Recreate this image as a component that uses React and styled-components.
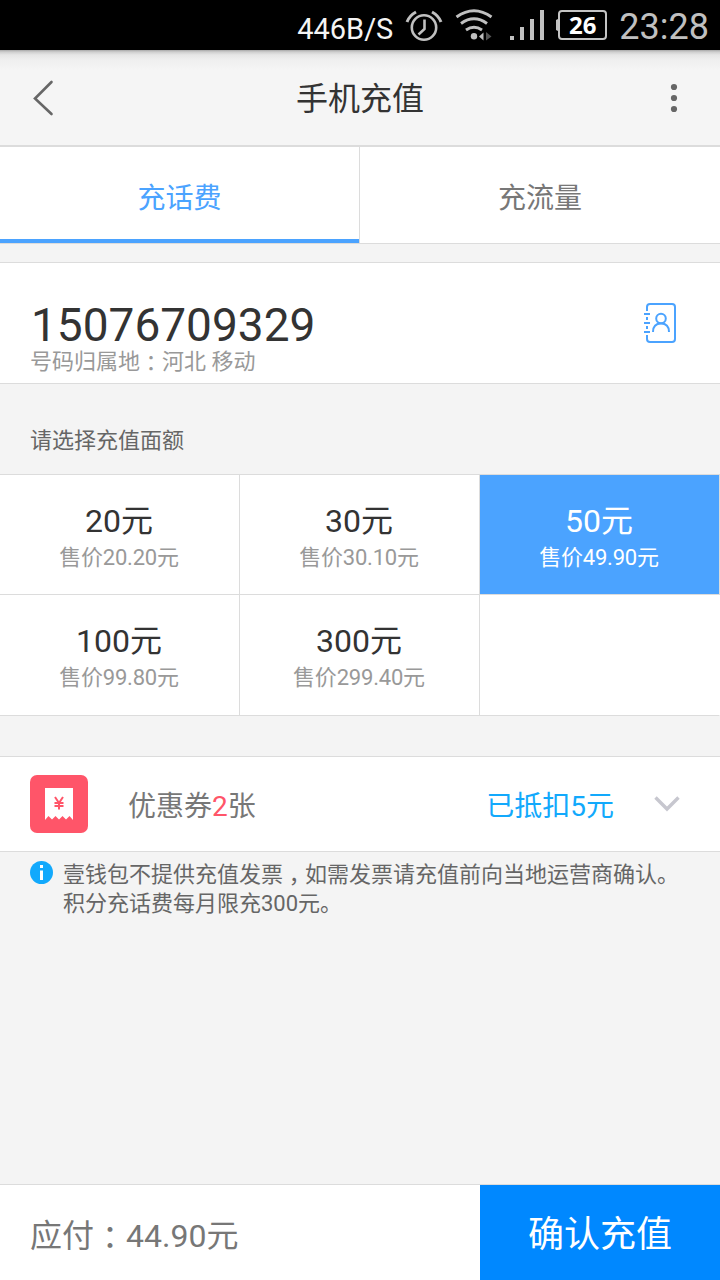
import React from 'react'
import styled, { createGlobalStyle } from 'styled-components'
import { useState } from 'react';

const GlobalStyle=createGlobalStyle`
  *{
    box-sizing:border-box;
  }
  body{
    margin:0;
    background-color:#f4f4f4;
    font-family: Roboto, "Noto Sans CJK SC", sans-serif;
  }
`;
const Page=styled.div`
  width:720px;
  height:1280px;
  display:flex;
  flex-direction:column;
  overflow:hidden;
  background-color:#f4f4f4;
`;
// ///////////// status bar /////////////
const StatusBar=styled.div`
  height:50px;
  flex:none;
  display:flex;
  align-items:center;
  justify-content:flex-end;
  padding-right:11px;
  background-color:#000;
`;
const Speed=styled.span`
  color:#f4f4f4;
  font-size:29px;
  line-height:34px;
  padding-top:8px;
  margin-right:11px;
`;
const StatusIcons=styled.svg`
  display:block;
  flex:none;
`;
const Battery=styled.div`
  width:49px;
  height:30px;
  margin-right:12px;
  border:2px solid #c4c4c4;
  border-radius:4px;
  color:#fff;
  font:bold 24px/26px "Noto Sans", sans-serif;
  text-align:center;
`;
const Clock=styled.span`
  color:#c0c0c0;
  font-size:36px;
  line-height:40px;
  padding-top:3px;
`;
// ///////////// header /////////////
const Header=styled.div`
  height:97px;
  flex:none;
  display:flex;
  align-items:center;
  justify-content:space-between;
  padding:0 41px 0 32px;
  border-bottom:2px solid #dcdcdc;
  background:linear-gradient(#a8a8a8 0, #cfcfcf 2px, #e6e6e6 5px, #efefef 10px, #f5f5f5 20px);
`;
const Title=styled.h1`
  margin:0;
  padding:2px 5px 0 0;
  color:#333;
  font-size:32px;
  font-weight:400;
  line-height:46px;
`;
const Tabs=styled.div`
  height:97px;
  flex:none;
  display:flex;
  background-color:#fff;
`;
const Tab=styled.div`
  width:360px;
  padding-top:32px;
  border-right:${props=>props.$active?'1px solid #dcdcdc':'none'};
  color:${props=>props.$active?'#4ba3ff':'#777'};
  font-size:28px;
  line-height:40px;
  text-align:center;
  display:flex;
  flex-direction:column;
  justify-content:space-between;
  cursor:pointer;
`;
const TabLine=styled.div`
  height:${props=>props.$active?'5px':'1px'};
  border-bottom:1px solid #dcdcdc;
  background-color:${props=>props.$active?'#4ba3ff':'#fff'};
`;
// ///////////// phone /////////////
const PhoneCard=styled.div`
  height:122px;
  flex:none;
  margin-top:18px;
  padding:35px 43px 0 30px;
  display:flex;
  justify-content:space-between;
  border-top:1px solid #dcdcdc;
  border-bottom:1px solid #dcdcdc;
  background-color:#fff;
`;
const PhoneNumber=styled.div`
  padding-left:1px;
  color:#333;
  font-size:46px;
  line-height:54px;
`;
const Location=styled.div`
  margin-top:-6px;
  color:#999;
  font-size:22px;
  line-height:32px;
`;
const BookIcon=styled.svg`
  display:block;
  margin-top:4px;
`;
// full-width punctuation that sits in the middle of its cell
const Mid=styled.span`
  font-family:"Noto Sans CJK TC", sans-serif;
  line-height:0;
  vertical-align:${props=>props.$drop || '-2px'};
`;
const Label=styled.div`
  height:90px;
  flex:none;
  padding:41px 30px 0;
  color:#666;
  font-size:22px;
  line-height:32px;
`;
// ///////////// amounts /////////////
const Grid=styled.div`
  flex:none;
  display:grid;
  grid-template-columns:repeat(3, 240px);
  grid-template-rows:120px 121px;
  border-top:1px solid #dcdcdc;
  background-color:#fff;
`;
const Cell=styled.div`
  padding:24px 1px 0 0;
  border-right:1px solid ${props=>props.$last?'#fff':'#dcdcdc'};
  border-bottom:1px solid #dcdcdc;
  background-color:${props=>props.$active?'#4ba3ff':'#fff'};
  color:${props=>props.$active?'#fff':'#999'};
  font-size:22px;
  line-height:32px;
  letter-spacing:-0.2px;
  text-align:center;
  cursor:pointer;
`;
const Amount=styled.div`
  color:${props=>props.$active?'#fff':'#333'};
  font-size:32px;
  line-height:44px;
  letter-spacing:0;
  margin-bottom:-1px;
`;
// ///////////// coupon /////////////
const Coupon=styled.div`
  height:96px;
  flex:none;
  margin-top:40px;
  padding:0 40px 0 30px;
  display:flex;
  align-items:center;
  border-top:1px solid #dcdcdc;
  border-bottom:1px solid #dcdcdc;
  background-color:#fff;
  color:#777;
  font-size:28px;
  line-height:40px;
`;
const CouponIcon=styled.div`
  width:58px;
  height:58px;
  margin-right:40px;
  display:flex;
  justify-content:center;
  padding-top:13px;
  border-radius:7px;
  background-color:#ff5569;
`;
const CouponText=styled.span`
  padding-top:5px;
`;
const Count=styled.span`
  color:#ff5569;
`;
const Deducted=styled.span`
  margin-left:auto;
  margin-right:40px;
  padding-top:5px;
  color:#12a9fc;
`;
const Notice=styled.div`
  display:flex;
  padding:8px 30px 0;
  color:#666;
  font-size:22px;
  line-height:29px;
`;
const InfoIcon=styled.svg`
  flex:none;
  margin:1px 9px 0 0;
`;
// ///////////// footer /////////////
const Footer=styled.div`
  height:96px;
  flex:none;
  margin-top:auto;
  display:flex;
  border-top:1px solid #dcdcdc;
  background-color:#fff;
`;
const Total=styled.div`
  width:480px;
  padding:28px 0 0 30px;
  color:#777;
  font-size:32px;
  line-height:46px;
`;
const Confirm=styled.button`
  width:240px;
  border:none;
  padding:0 0 3px;
  background-color:#0088ff;
  color:#fff;
  font-family:inherit;
  font-size:36px;
`;

const amounts=[
  {value:'20',price:'20.20'},
  {value:'30',price:'30.10'},
  {value:'50',price:'49.90'},
  {value:'100',price:'99.80'},
  {value:'300',price:'299.40'},
]

const App = () => {
  const [tab,setTab]=useState(0)
  const [selected,setSelected]=useState('50')

  return (
    <>
      <GlobalStyle />
      <Page>
        <StatusBar>
          <Speed>446B/S</Speed>
          {/* alarm, wifi, signal, battery tip */}
          <StatusIcons width="154" height="50" viewBox="404 0 154 50" fill="none" stroke="#c0c0c0">
            <circle cx="424" cy="27.5" r="12.2" strokeWidth="2.6" />
            <path d="M424.5 19.5V29L418.5 34.5" strokeWidth="2.6" />
            <path d="M407 22Q409.500 15.500 416 12M441 22Q438.500 15.500 432 12" strokeWidth="3" />
            <path d="M456.500 17Q474 4.500 491.500 17M461 23.500Q474 14 487 23.500M466 30Q474 24.500 482 30" strokeWidth="3" />
            <circle cx="474" cy="36.300" r="3.200" fill="#c0c0c0" stroke="none" />
            <path d="M479 36.500L483.500 32.500V40.500Z" fill="#c0c0c0" stroke="none" />
            <path d="M486 32L491.500 36.500L486 40.500Z" fill="#555" stroke="none" />
            <path d="M510 36h4v4h-4zM520 27h4v13h-4zM530 19h4v21h-4zM540 10h4v30h-4z" fill="#c0c0c0" stroke="none" />
            <path d="M558 19L556 20V30L558 31Z" fill="#c0c0c0" stroke="none" />
          </StatusIcons>
          <Battery>26</Battery>
          <Clock>23:28</Clock>
        </StatusBar>
        <Header>
          <svg width="24" height="36" viewBox="0 0 24 36" fill="none" stroke="#666" strokeWidth="2.6" strokeLinecap="round">
            <path d="M19.500 2L3 18.500L19.500 34" />
          </svg>
          <Title>手机充值</Title>
          <svg width="10" height="30" viewBox="0 0 10 30" fill="#666">
            <circle cx="5" cy="4" r="3.100" />
            <circle cx="5" cy="15" r="3.100" />
            <circle cx="5" cy="26" r="3.100" />
          </svg>
        </Header>
        <Tabs>
          {['充话费','充流量'].map((name,i)=>(
            <Tab key={name} $active={tab===i} onClick={()=>setTab(i)}>
              {name}
              <TabLine $active={tab===i} />
            </Tab>
          ))}
        </Tabs>
        <PhoneCard>
          <div>
            <PhoneNumber>15076709329</PhoneNumber>
            <Location>号码归属地<Mid>：</Mid>河北 移动</Location>
          </div>
          <BookIcon width="34" height="42" viewBox="0 0 34 42" fill="none" stroke="#4ba3ff" strokeWidth="2">
            <path d="M4 9V5Q4 2 7 2H29Q32 2 32 5V37Q32 40 29 40H7Q4 40 4 37V33M4 15v3M4 24v3" />
            <path d="M1 12h6M1 21h6M1 30h6" />
            <circle cx="18" cy="16.500" r="4.800" />
            <path d="M10 30Q10 21.500 18 21.500T26 30" />
          </BookIcon>
        </PhoneCard>
        <Label>请选择充值面额</Label>
        <Grid>
          {amounts.map(a=>(
            <Cell key={a.value} $active={selected===a.value} onClick={()=>setSelected(a.value)}>
              <Amount $active={selected===a.value}>{a.value}元</Amount>
              售价{a.price}元
            </Cell>
          ))}
          <Cell $last />
        </Grid>
        <Coupon>
          <CouponIcon>
            <svg width="28" height="33" viewBox="0 0 28 33">
              <path d="M0 0H28V32L24.500 28L21 31.500L17.500 28L14 31.500L10.500 28L7 31.500L3.500 28L0 32Z" fill="#fff" />
              <path d="M10 9L14 15L18 9M14 14.500V21.500M9.500 15H18.500M9.500 18H18.500" fill="none" stroke="#ff5569" strokeWidth="2" />
            </svg>
          </CouponIcon>
          <CouponText>优惠券<Count>2</Count>张</CouponText>
          <Deducted>已抵扣5元</Deducted>
          <svg width="26" height="18" viewBox="0 0 26 18" fill="none" stroke="#c7c7cf" strokeWidth="3.400">
            <path d="M1.500 2.500L13 14L24.500 2.500" />
          </svg>
        </Coupon>
        <Notice>
          <InfoIcon width="24" height="24" viewBox="0 0 24 24">
            <circle cx="11.500" cy="11.500" r="11.500" fill="#12a9fc" />
            <path d="M10 4h3v3h-3zM10 9.500h3v9.500h-3z" fill="#fff" />
          </InfoIcon>
          <div>
            壹钱包不提供充值发票<Mid $drop="-7px">，</Mid>如需发票请充值前向当地运营商确认。<br />
            积分充话费每月限充300元。
          </div>
        </Notice>
        <Footer>
          <Total>应付<Mid>：</Mid>44.90元</Total>
          <Confirm>确认充值</Confirm>
        </Footer>
      </Page>
    </>
  )
}

export default App
